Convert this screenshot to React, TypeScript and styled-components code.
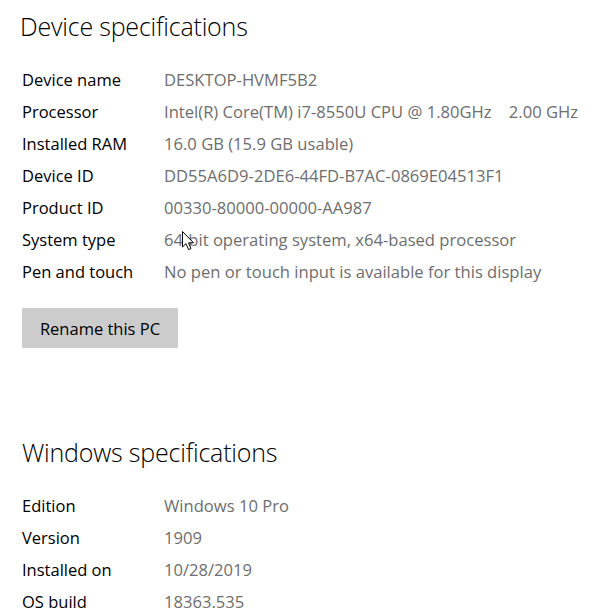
import React from 'react';
import styled, { createGlobalStyle } from 'styled-components';

const GlobalStyle = createGlobalStyle`
  html, body {
    margin: 0;
    padding: 0;
    background: #ffffff;
  }
  body {
    font-family: "Open Sans", "Noto Sans", "Liberation Sans", sans-serif;
    color: #000000;
  }
`;

const Page = styled.div`
  position: relative;
  width: 596px;
  height: 616px;
  overflow: hidden;
  padding: 0 0 0 22px;
  box-sizing: border-box;
`;

const Section = styled.section<{ top: number }>`
  display: flex;
  flex-direction: column;
  align-items: flex-start;
  padding-top: ${p => p.top}px;
`;

const Title = styled.h2<{ shift?: number }>`
  margin: 0 0 0 ${p => p.shift ?? 0}px;
  font-size: 25px;
  font-weight: 300;
  line-height: 36px;
  letter-spacing: -0.2px;
  color: #000000;
`;

const Table = styled.div`
  display: grid;
  grid-template-columns: 142px auto;
  grid-auto-rows: 32px;
  align-items: center;
  margin-top: 19px;
`;

const Label = styled.div`
  font-size: 16.5px;
  white-space: nowrap;
  color: #000000;
`;

const Value = styled.div`
  font-size: 16.6px;
  white-space: pre;
  color: #6e6e6e;
`;

const Button = styled.button`
  margin-top: 21px;
  width: 156px;
  height: 40px;
  border: none;
  background: #cccccc;
  font-family: inherit;
  font-size: 16.5px;
  color: #000000;
  padding: 0;
`;

const Cursor = styled.svg`
  position: absolute;
  left: 182px;
  top: 231px;
`;

const device: [string, string][] = [
  ['Device name', 'DESKTOP-HVMF5B2'],
  ['Processor', 'Intel(R) Core(TM) i7-8550U CPU @ 1.80GHz    2.00 GHz'],
  ['Installed RAM', '16.0 GB (15.9 GB usable)'],
  ['Device ID', 'DD55A6D9-2DE6-44FD-B7AC-0869E04513F1'],
  ['Product ID', '00330-80000-00000-AA987'],
  ['System type', '64-bit operating system, x64-based processor'],
  ['Pen and touch', 'No pen or touch input is available for this display'],
];

const windows: [string, string][] = [
  ['Edition', 'Windows 10 Pro'],
  ['Version', '1909'],
  ['Installed on', '10/28/2019'],
  ['OS build', '18363.535'],
];

const SpecTable: React.FC<{ rows: [string, string][] }> = ({ rows }) => (
  <Table>
    {rows.map(([k, v]) => (
      <React.Fragment key={k}>
        <Label>{k}</Label>
        <Value>{v}</Value>
      </React.Fragment>
    ))}
  </Table>
);

export default function App() {
  return (
    <>
      <GlobalStyle />
      <Page>
        <Section top={8}>
          <Title shift={-2}>Device specifications</Title>
          <SpecTable rows={device} />
          <Button>Rename this PC</Button>
        </Section>
        <Section top={86}>
          <Title>Windows specifications</Title>
          <SpecTable rows={windows} />
        </Section>
        <Cursor width="13" height="20" viewBox="0 0 13 20">
          <path
            d="M0.5 0.5 L0.5 16 L4 12.6 L6.6 18.6 L9 17.6 L6.5 11.8 L11.5 11.8 Z"
            fill="#ffffff"
            stroke="#000000"
            strokeWidth="1"
            strokeLinejoin="miter"
          />
        </Cursor>
      </Page>
    </>
  );
}
